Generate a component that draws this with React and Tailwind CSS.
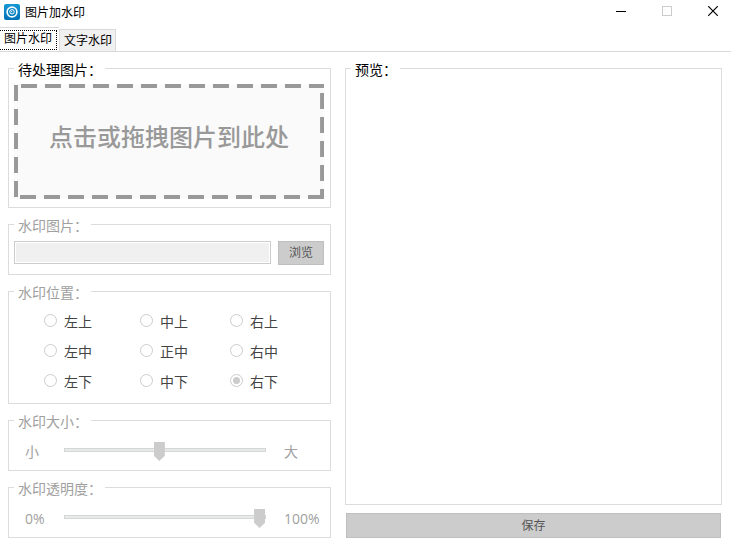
import React, { useState } from "react";

const POSITIONS = ["左上", "中上", "右上", "左中", "正中", "右中", "左下", "中下", "右下"];

function AppIcon() {
  return (
    <svg className="w-4 h-4 shrink-0" viewBox="0 0 16 16" aria-hidden="true">
      <defs>
        <linearGradient id="app-icon-bg" x1="0" y1="0" x2="0" y2="1">
          <stop offset="0" stopColor="#1698d5" />
          <stop offset="1" stopColor="#0071b5" />
        </linearGradient>
      </defs>
      <rect width="16" height="16" rx="2" fill="url(#app-icon-bg)" />
      <circle cx="8" cy="8" r="4.9" fill="none" stroke="#fff" strokeWidth="1.6" />
      <circle cx="8" cy="7.8" r="2.2" fill="none" stroke="#fff" strokeWidth="1" />
      <circle cx="7.6" cy="7.6" r="0.6" fill="#fff" />
    </svg>
  );
}

function TitleBar() {
  return (
    <header className="flex items-start justify-between h-[27px] pl-1">
      <div className="flex items-center gap-[5px] pt-[3px]">
        <AppIcon />
        <h1 className="pt-[2px] text-xs leading-4">图片加水印</h1>
      </div>
      <div className="flex gap-[10px]">
        <button aria-label="最小化" className="flex items-center justify-center w-9 h-[23px]">
          <svg width="10" height="11" viewBox="0 0 10 11" shapeRendering="crispEdges">
            <path d="M0 5.5H10" stroke="#000" />
          </svg>
        </button>
        <button aria-label="最大化" disabled className="flex items-center justify-center w-9 h-[23px]">
          <svg width="10" height="11" viewBox="0 0 10 11" shapeRendering="crispEdges">
            <path d="M0.5 0.5H9.5V9.5H0.5Z" fill="none" stroke="#ccc" />
          </svg>
        </button>
        <button aria-label="关闭" className="flex items-center justify-center w-9 h-[23px]">
          <svg width="10" height="11" viewBox="0 0 10 11">
            <path d="M0.2 0.2L9.8 9.8M9.8 0.2L0.2 9.8" stroke="#000" strokeWidth="1.2" />
          </svg>
        </button>
      </div>
    </header>
  );
}

function Tabs({ active, onChange }) {
  return (
    <div role="tablist" className="flex items-end h-[25px] border-b border-[#d9d9d9] text-xs leading-4">
      <button
        role="tab"
        aria-selected={active === "image"}
        onClick={() => onChange("image")}
        className="self-stretch pt-[2px] pb-px pr-[2px] border-t border-[#d9d9d9] bg-white"
      >
        <span className="block h-[20px] px-[4px] border border-l-0 border-dotted border-black">图片水印</span>
      </button>
      <button
        role="tab"
        aria-selected={active === "text"}
        onClick={() => onChange("text")}
        className="h-[22px] pl-[4px] pr-[3px] pt-px border border-b-0 border-[#d9d9d9] bg-[#f0f0f0]"
      >
        文字水印
      </button>
    </div>
  );
}

function Group({ title, disabled, className, children }) {
  return (
    <fieldset
      disabled={disabled}
      className={"min-w-0 pl-[5px] pr-[6px] border border-[#dcdcdc] text-sm leading-5 " + (className || "")}
    >
      <legend className={"pl-1 pr-[3px] pt-[2px] leading-[17px] " + (disabled ? "text-[#a0a0a0]" : "text-black")}>
        {title}
      </legend>
      {children}
    </fieldset>
  );
}

function DropZone() {
  return (
    <button className="relative block w-full h-[115px] mt-[6px] pb-[10px] bg-[#fafafa] text-2xl font-medium text-[#999]">
      点击或拖拽图片到此处
      <svg className="absolute inset-0 w-full h-full" stroke="#999" strokeWidth="4" strokeDasharray="16 8" aria-hidden="true">
        <line x1="7" y1="2" x2="100%" y2="2" />
        <line x1="2" y1="1" x2="2" y2="100%" />
        <svg x="100%" overflow="visible">
          <line x1="-2" y1="9" x2="-2" y2="100%" />
        </svg>
        <svg y="100%" overflow="visible">
          <line x1="6" y1="-2" x2="100%" y2="-2" />
        </svg>
      </svg>
    </button>
  );
}

function Slider({ label, min, max, value, onChange }) {
  return (
    <div className="grid grid-cols-[50px_1fr_58px] items-center h-[30px] mt-[7px] text-[#a0a0a0]">
      <span className="pl-[11px]">{min}</span>
      <input
        type="range"
        aria-label={label}
        value={value}
        onChange={(e) => onChange(Number(e.target.value))}
        className="w-full min-w-0 h-[19px] mb-1 appearance-none bg-transparent [&::-webkit-slider-runnable-track]:h-1 [&::-webkit-slider-runnable-track]:border [&::-webkit-slider-runnable-track]:border-[#d6d6d6] [&::-webkit-slider-runnable-track]:bg-[#e7eaea] [&::-webkit-slider-thumb]:appearance-none [&::-webkit-slider-thumb]:-mt-[7px] [&::-webkit-slider-thumb]:w-[11px] [&::-webkit-slider-thumb]:h-[19px] [&::-webkit-slider-thumb]:bg-[#ccc] [&::-webkit-slider-thumb]:[clip-path:polygon(0_0,100%_0,100%_72%,50%_100%,0_72%)]"
      />
      <span className="pl-[18px]">{max}</span>
    </div>
  );
}

export default function App() {
  const [tab, setTab] = useState("image");
  const [position, setPosition] = useState("右下");
  const [size, setSize] = useState(47);
  const [opacity, setOpacity] = useState(100);

  return (
    <div className="min-h-screen flex flex-col bg-white text-black font-['Open_Sans','Noto_Sans_CJK_SC',sans-serif]">
      <TitleBar />
      <Tabs active={tab} onChange={setTab} />

      <main className="flex-1 grid grid-cols-[6fr_7fr] gap-[14px] py-[7px] pl-2 pr-[9px]">
        <div className="flex flex-col gap-[7px] min-w-0">
          <Group title="待处理图片：" className="pb-2">
            <DropZone />
          </Group>

          <Group title="水印图片：" disabled className="pb-[9px]">
            <div className="flex items-start gap-[7px] mt-[7px]">
              <input
                type="text"
                aria-label="水印图片"
                className="flex-1 min-w-0 h-[23px] p-px border border-[#ccc] bg-[#f0f0f0] bg-clip-content"
              />
              <button className="w-[46px] h-6 border border-[#bfbfbf] bg-[#ccc] text-xs text-[#555]">浏览</button>
            </div>
          </Group>

          <Group title="水印位置：" disabled className="pb-2">
            <div className="grid grid-cols-[96px_90px_1fr] pl-[30px] pt-1">
              {POSITIONS.map((name) => (
                <label key={name} className="flex items-center gap-[7px] h-[30px] text-[#444]">
                  <input
                    type="radio"
                    name="position"
                    checked={position === name}
                    onChange={() => setPosition(name)}
                    className="appearance-none w-[13px] h-[13px] rounded-full border border-[#ccc] bg-white p-[2px] bg-clip-content checked:bg-[#ccc]"
                  />
                  <span className="pt-[3px]">{name}</span>
                </label>
              ))}
            </div>
          </Group>

          <Group title="水印大小：" disabled className="pb-[3px]">
            <Slider label="水印大小" min="小" max="大" value={size} onChange={setSize} />
          </Group>

          <Group title="水印透明度：" disabled className="pb-[3px]">
            <Slider label="水印透明度" min="0%" max="100%" value={opacity} onChange={setOpacity} />
          </Group>
        </div>

        <div className="flex flex-col gap-2 min-w-0">
          <Group title="预览：" className="flex-1" />
          <button disabled className="h-[25px] mx-px border border-[#bfbfbf] bg-[#ccc] text-xs text-[#555]">
            保存
          </button>
        </div>
      </main>
    </div>
  );
}
